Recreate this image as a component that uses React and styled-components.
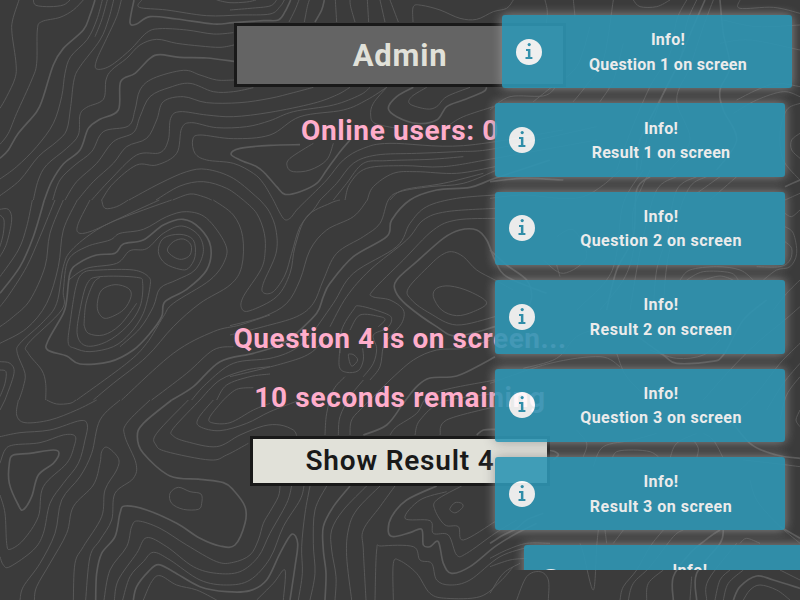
import React from 'react';
import styled, { createGlobalStyle } from 'styled-components';

const GlobalStyle = createGlobalStyle`
  * { box-sizing: border-box; }
  html, body, #root { margin: 0; height: 100%; overflow: hidden; }
  body { background: #3b3b3b; font-family: Roboto, "Liberation Sans", sans-serif; }
`;

/* Contour map: each tile has an origin; points are in thirds of a pixel.
   A leading "T" marks an index contour, a trailing "Z" a closed ring. */
const tiles = [
  { x: 0, y: 0, lines: `
57,0 38,60 36,100 48,190 45,235 20,290 0,325
100,0 108,16 150,20 190,15 210,0
250,0 220,30 180,52 125,65 112,90 110,190 95,240 50,340 25,400 0,433
T 285,0 270,45 250,90 190,145 160,195 130,290 110,335 55,400 25,450 0,475
307,0 290,60 262,118 212,170 195,220 185,290 160,370 110,440 50,500 0,537
341,0 325,60 300,120 240,200 222,240 212,320 200,390 170,425 115,470 60,540 0,587
322,0 305,60 285,110
364,0 350,50 320,115 290,180 290,207 330,198 390,150 440,98 480,86 560,90 640,102 700,98
100,600 115,540 140,495 200,445 235,405 240,345 260,322 310,298 318,240 335,210 380,175 420,135 470,118 530,130 600,138 660,142 702,135
T 133,600 155,545 190,492 240,450 265,385 300,358 355,330 362,245 405,220 450,175 480,164 540,172 620,174 702,184
158,600 180,540 225,495 275,455 310,395 385,378 405,330 420,270 460,235 550,211 600,225 650,240 702,240
195,600 230,545 290,490 340,425 400,398 420,350 450,290 510,262 570,250 640,275 700,275 760,263
233,600 280,545 340,490 380,440 440,415 470,360 490,305 550,290 620,308 720,308 810,295 880,278 940,262
275,600 330,540 410,465 480,458 505,420 512,355 540,335 620,345 700,350 810,337 940,310 1010,285 1050,262
305,600 340,550 410,495 470,495 530,460 545,385 575,368 650,383 740,380 810,362 880,335 1000,315 1080,285 1110,262
1160,262 1100,300 1030,330 900,350 810,405 700,416 600,405 578,420 585,460 620,480 700,490 760,520 790,550 820,600
T 1050,420 1020,455 980,510 950,550 900,575 855,583 830,560 795,520 770,500 720,480 693,462 720,445 810,436 900,434
387,600 480,550 560,515 620,508 700,535 780,600
468,600 540,558 610,545 680,565 730,600
518,600 570,582 610,590 635,600
T 402,0 390,68 410,72 450,50 530,57 640,72 700,68 790,62 835,60 855,35 872,0
425,0 418,22 500,30 620,47 720,45 810,42 840,20 853,0
650,0 690,8 740,6 768,0` },
  { x: 230, y: 0, lines: `
0,30 60,25 120,18 140,0
177,66 195,30 207,0
223,66 232,20 238,0
T 255,66 275,30 283,0
320,66 316,0
375,66 362,20 360,0
416,66 412,0
465,66 450,0
505,66 480,0
549,66 550,20 575,16 630,30 690,55 740,58 790,35 830,25 850,0
250,430 180,475 172,500 190,515 240,510 290,480 310,430
T 550,262 500,290 475,325 500,350 560,370 620,360 650,320 700,300 760,275 770,262
590,262 545,290 540,312 590,327 620,320 650,290 720,262
470,262 430,310 422,345 435,370 500,385
230,600 290,540 340,480 400,445 480,430 700,437 1000,390
270,600 320,550 370,490 440,465 560,460 680,455 800,445 1100,380
310,600 350,550 400,490 470,482 600,478 700,470
345,600 360,550 410,505 520,497 640,500 795,475 1100,420
412,600 430,560 490,520 560,515 680,520 795,500
480,600 520,570 640,550 760,520
650,380 700,350 790,320` },
  { x: 230, y: 180, lines: `
40,60 80,100 103,160 105,220 92,270 40,350 35,385 60,392 140,350 180,280 195,200 230,110 300,70 330,60
90,60 118,95 138,150 138,220 100,310 100,338 130,335 165,285 185,220 210,140 250,90 270,60
130,60 160,115 180,115 200,90 230,60
0,437 100,410 170,370 210,300 240,210 290,150 370,110 412,60
0,465 100,440 200,410 250,370 280,300 320,220 400,170 450,130 475,60 510,35 600,20 700,10 800,-30
T 200,460 260,400 280,350 300,310 370,230 470,170 485,120 540,60 620,30 720,22 795,-5 960,-60
240,470 310,370 370,280 500,200 540,130 590,80 680,55 795,45
300,440 350,350 420,270 530,180 580,120 650,95 795,85
795,115 680,120 610,150 520,240 430,330 428,350 480,360 520,390 515,430 480,470 460,500 450,560 420,600
T 950,340 830,290 795,240 770,180 740,150 690,150 640,175 560,245 500,300 497,335 530,375 620,440 680,468 795,440
850,330 795,300 740,270 700,230 665,215 635,225 600,255 535,325 545,360 600,400 680,435 795,410
610,350 620,325 660,318 720,335 770,368 730,395 680,407 635,390 Z
330,520 335,450 370,390 390,378 470,402 485,420 470,445 430,465 440,505 430,550 400,590
360,450 390,405 450,410 465,420 445,440
355,525 360,550 368,558 383,540 372,525 360,522 Z
330,500 328,560 350,577 385,572 400,540 398,505
480,600 550,540 620,510 700,505 780,480
0,590 160,550 240,520 290,470` },
  { x: 0, y: 200, lines: `
0,28 25,28 35,60 20,130 0,170
0,45 12,60 10,100 0,140
97,0 80,80 55,150 0,230
T 133,0 100,110 60,200 0,280
165,0 120,110 80,200 30,280 0,320
190,0 150,100 135,200 90,300 40,350 0,380
232,0 190,90 175,200 140,310 80,385 0,430
270,0 235,70 235,98 270,95 350,60 430,30 515,0
305,0 315,25 350,20 385,0
478,0 380,45 290,90 215,150 190,200 170,310 130,365 60,430 52,460 75,520 70,560 57,600
137,600 137,550 125,510 85,460 85,430 185,330 190,270 205,180 260,140 330,120 360,100 430,88 500,50 560,35 620,55 675,130 675,180 630,240 520,310 490,350 440,430 380,490 230,600
T 210,220 200,300 190,340 145,420 143,450 200,468 240,492 330,485 400,450 450,400 485,350 495,305 560,268 620,210 632,140 600,85 550,58 490,75 430,120 370,132 345,160 290,165 235,190 Z
205,430 210,370 228,260 250,218 300,210 400,210 445,230 450,260 430,340 390,400 340,440 270,455 225,445 Z
232,405 240,330 262,250 300,230 410,232 428,250 420,320 380,380 320,425 260,438 Z
252,375 258,310 280,250 300,232
252,375 265,400 310,405 360,375 410,310
292,310 305,270 345,254 385,265 393,290 370,330 320,355 297,340 Z
206,240 260,205 350,190 390,152 440,146 490,100 545,78 595,105 610,155 585,210 530,240 480,265 460,320 420,385 360,440
475,155 490,115 540,103 580,120 585,170 565,205 540,208 495,190 Z
502,150 520,125 550,117 573,135 570,165 545,178 520,170 Z
640,0 700,45 728,110 725,200 690,255 600,310 520,380 440,470 340,550 280,600
365,600 520,460 640,395 720,375 810,345
455,600 560,520 640,450 700,440
T 515,600 580,560 660,485 760,460 840,435 890,400
575,600 620,550 700,490 810,475 880,450 930,410
600,600 660,540 740,510 810,500
650,600 680,555 750,530 810,522
670,600 710,568 760,563
0,485 30,490 42,520 15,600
0,510 18,515 15,550 0,590` },
  { x: 0, y: 400, lines: `
55,0 50,45 75,68 150,60 230,30 290,0
140,0 170,12 210,10 228,0
15,0 0,30
0,110 60,98 150,90 240,62 262,75 255,120 235,190 190,250 150,310 130,400 100,450 30,500 10,495 0,470
0,190 15,150 40,135 120,128 190,105 225,108 222,140 200,190 130,260 115,350 70,420 30,448 20,430 15,340 0,285
T 40,165 90,160 160,150 177,160 160,190 115,225 95,290 70,329 55,315 28,250 28,190 Z
360,0 300,60 275,160 240,230 185,300 165,400 120,490 70,560 60,600
103,600 110,560 150,490 200,400 220,320 280,255 300,190 305,155 322,142 355,175 350,210 315,270 305,350 250,440 225,490 220,600
450,0 380,70 375,110 408,190 400,235 345,280 335,360 300,420 270,470 257,600
T 515,0 430,70 412,110 430,160 510,228 600,238 670,248 700,270 735,320 735,370 705,435 660,438 600,415 530,370 440,330 375,318 360,340 345,410 305,460 290,520 287,600
565,0 470,100 468,135 500,155 630,180 680,165 745,130
600,0 520,85 520,108 560,125 650,140 720,105 790,78 840,75 880,90 890,107
640,0 595,55 600,80 660,92 740,70 810,35 900,0
670,0 630,50 635,68 690,68 760,30 810,10
510,280 535,262 570,275 603,282 605,310 595,328 550,328 515,310 Z
312,600 330,510 380,440 395,380 415,363 480,385 560,435 650,485 700,487 750,465 775,420 790,370 810,335 835,290 840,258
343,600 355,540 410,460 440,413 500,440 580,500 650,520 720,515 775,470 810,400 860,310 875,258
368,600 390,530 430,485 460,457 510,480 600,540 680,555 750,540 810,475 850,380 900,300 912,258
T 400,600 410,560 445,515 475,494 520,515 600,560 680,575 750,572 800,540 840,460 875,403 893,430 885,500 870,600
430,600 455,545 480,527 530,555 590,570 650,600` },
  { x: 230, y: 400, lines: `
285,105 290,40 310,-30 345,-70
325,105 330,50 360,-10 400,-60
360,105 365,60 400,20 480,-60
T 400,105 470,75 520,10 560,-40 600,-66 680,-72 760,-110 795,-130
480,105 500,80 560,40 610,-20 795,-60
555,105 570,60 640,5 795,-20
630,105 650,60 795,20
T 740,105 760,90 795,88
80,600 130,550 165,510 160,600
240,258 225,340 215,440 217,520 205,600
290,258 255,330 250,430 255,520 240,600
T 360,258 310,320 280,380 280,450 288,520 285,600
410,258 340,330 305,390 305,450 318,530 315,600
450,258 380,330 355,390 350,470 365,600
495,258 450,320 400,390 400,450 408,600
T 620,258 530,300 485,350 475,395 490,410 540,398 575,388 580,435 600,440 625,425 640,490 665,520 720,500 795,440 860,400 920,370
650,275 570,300 525,355 600,362 610,400 655,405 680,465 710,460 795,400 860,360
695,258 620,300 615,330 645,375 685,380 700,420 795,365
660,325 675,308 695,310 698,322 678,338 664,334 Z
435,600 440,450 455,438 550,440 570,480 605,490 620,540 660,555 720,540 810,470 900,440
490,600 490,490 510,482 560,520 600,580 650,595 750,590 810,545 850,500` },
  { x: 490, y: 0, lines: `
165,0 172,45 160,140 200,230 170,285 60,290 0,330
250,0 255,50
430,0 450,20 500,20 540,0
590,0 560,60 540,160 480,260 420,400 380,510
620,0 590,70 570,180 520,280 470,420 450,510
T 645,0 610,80 560,200 510,300 450,420 440,510
670,0 640,80 600,200 560,300 600,420 540,510
750,0 750,25 850,22 930,40
700,60 800,80 930,75
690,130 780,120 930,150
T 690,0 700,100 720,200 690,270 700,330 740,420 680,510
740,300 800,270 860,250 930,260
730,340 800,300 880,275 930,290
930,400 905,420 905,450 930,475
930,310 890,330 870,400 880,480 930,540
130,305 180,265 260,200 300,80
250,305 290,255 340,180 370,0
330,305 370,240 400,130
0,595 100,585 210,595 280,590 340,555 390,510
T 0,545 100,535 220,540` },
  { x: 490, y: 170, lines: `
460,0 400,100 380,250 350,330 260,420
480,0 430,120 430,240 400,330 330,420
560,20 500,60 460,200 440,300 420,420
T 480,20 440,60 430,200 380,300 350,420
620,20 560,60 530,200 500,300 490,420
650,20 600,50 560,150 530,290 520,420
690,20 620,70
740,20 660,90
T 0,240 50,285 110,330 125,380 110,420
200,285 210,320
160,270 220,310 290,260 250,180 200,200
570,330 600,300 680,290 750,300 790,330
590,330 640,305 720,308 745,330
640,330 690,318 730,330
820,330 860,300 900,290 920,250 910,190 885,170
885,215 905,235 900,270 870,290 800,290
930,120 905,140 885,130
T 885,50 930,30
885,90 930,70
850,420 890,370 930,330` },
  { x: 490, y: 300, lines: `
100,205 200,175 260,110 340,80
0,250 180,190 330,170 390,200
T 430,100 520,165 560,190 660,185 700,165 760,60 830,0
480,150 560,175 640,165 690,120
380,160 410,230 480,300
930,20 890,55 800,130 720,210 640,300
930,130 870,190 800,280 740,340
930,190 880,250 830,330
930,230 890,285 870,360
930,330 918,360 930,380
280,470 290,430 260,390
310,500 340,440 430,420 500,400
365,480 380,455 430,450 480,455 505,470
T 170,450 195,455 205,465 190,480
540,475 560,430 620,400
620,475 625,445 610,420
700,475 670,420 640,400
T 930,475 860,465 780,430 700,330
930,500 850,490 760,480` },
  { x: 490, y: 480, lines: `
T 0,190 40,165 80,145 110,120 160,100
0,235 50,210 110,190 180,190
0,260 60,240 110,235
0,340 40,280 90,250
80,360 110,290 150,275 175,300 175,360
270,190 280,220 310,330 320,200 325,150
350,190 345,150
370,190 400,150
390,360 400,320 440,270 480,200 520,150
415,360 430,310 480,260 550,170 580,150
470,360 475,310 520,270
T 550,360 550,290 600,220 660,170 690,150
600,360 605,290
T 620,360 620,280 690,190 700,150
650,360 655,300 740,190
750,190 770,175 810,190
675,360 690,300 720,270
700,360 715,310 760,270
T 730,360 750,320 800,288 850,300 930,325
760,360 780,330 810,315 860,330 900,360
930,300 870,270
780,0 800,60 860,130 930,190
T 870,140 930,175` },
];

function toPath(points, closed) {
  const n = points.length;
  const at = (i) => (closed ? points[(i + n) % n] : points[Math.max(0, Math.min(n - 1, i))]);
  let d = `M${points[0][0]} ${points[0][1]}`;
  const last = closed ? n : n - 1;
  for (let i = 0; i < last; i += 1) {
    const [a, b, c, e] = [at(i - 1), at(i), at(i + 1), at(i + 2)];
    d += `C${b[0] + (c[0] - a[0]) / 6} ${b[1] + (c[1] - a[1]) / 6} ${c[0] - (e[0] - b[0]) / 6} ${c[1] - (e[1] - b[1]) / 6} ${c[0]} ${c[1]}`;
  }
  return d;
}

const contours = tiles.map((tile) => ({
  ...tile,
  paths: tile.lines.trim().split('\n').map((raw) => {
    const line = raw.trim();
    const closed = line.endsWith('Z');
    const major = line.startsWith('T');
    const points = line.replace(/[TZ]/g, '').trim().split(/\s+/).map((p) => p.split(',').map(Number));
    return { d: toPath(points, closed), major };
  }),
}));

const Page = styled.div`
  position: relative;
  width: 800px;
  height: 600px;
  overflow: hidden;
  background: #3b3b3b;
`;

const Backdrop = styled.svg`
  position: absolute;
  inset: 0;
  width: 100%;
  height: 100%;
  fill: none;
`;

const Contour = styled.path`
  stroke: ${(p) => (p.$major ? '#5b5b5b' : '#5a5a5a')};
  stroke-width: ${(p) => (p.$major ? 5 : 2.8)};
`;

const Main = styled.main`
  position: relative;
  display: flex;
  flex-direction: column;
  align-items: center;
  padding-top: 23px;
`;

const Header = styled.header`
  display: flex;
  align-items: center;
  justify-content: center;
  width: 332px;
  height: 64px;
  border: 3px solid #191919;
  background: #646464;
`;

const Title = styled.h1`
  margin: 2px 0 0;
  color: #e1e1d9;
  font-size: 31px;
  line-height: 40px;
  font-weight: 700;
  letter-spacing: ${(p) => p.$track}px;
`;

const Status = styled.p`
  margin: ${(p) => p.$gap}px 0 0;
  color: #ffadcb;
  font-size: 28px;
  line-height: 36px;
  font-weight: 700;
  white-space: nowrap;
  letter-spacing: ${(p) => p.$track}px;
`;

const ResultButton = styled.button`
  width: 300px;
  height: 50px;
  margin-top: 20px;
  padding: 0;
  border: 3px solid #191919;
  background: #e1e1d9;
  color: #191919;
  font: 600 28px/36px Roboto, "Liberation Sans", sans-serif;
  letter-spacing: ${(p) => p.$track}px;
`;

const ToastStack = styled.aside`
  position: absolute;
  top: 0;
  right: 0;
  width: 330px;
  height: 570px;
  padding: 15px 0 0 25px;
  overflow: hidden;
`;

const shifts = { first: 7, rest: 0, entering: 29 };

const ToastCard = styled.div`
  display: grid;
  grid-template-columns: 26px 1fr;
  align-items: center;
  width: 290px;
  height: 73.4px;
  margin: 0 0 15px ${(p) => shifts[p.$place]}px;
  padding: 0 15px 0 14px;
  border-radius: 3px;
  background: #2f96b4;
  color: #fff;
  opacity: 0.9;
  box-shadow: 0 0 12px #999;
`;

const ToastText = styled.div`
  padding: 2px 0 0 17px;
  text-align: center;
  font-size: 16px;
  line-height: 24.4px;
  font-weight: 700;
  white-space: nowrap;
  letter-spacing: ${(p) => p.$track}px;
`;

const InfoGlyph = styled.svg`
  display: block;
  width: 26px;
  height: 26px;
`;

function InfoIcon() {
  return (
    <InfoGlyph viewBox="0 0 26 26">
      <circle cx="13" cy="13" r="13" fill="#fff" />
      <circle cx="13.2" cy="5.6" r="1.6" fill="#2f96b4" />
      <path d="M10 10h4.4v8h2v2H9.5v-2h2.4v-6H10z" fill="#2f96b4" />
    </InfoGlyph>
  );
}

const toasts = [
  { text: 'Question 1 on screen', place: 'first', track: 0.3 },
  { text: 'Result 1 on screen', place: 'rest', track: 0.3 },
  { text: 'Question 2 on screen', place: 'rest', track: 0.48 },
  { text: 'Result 2 on screen', place: 'rest', track: 0.5 },
  { text: 'Question 3 on screen', place: 'rest', track: 0.48 },
  { text: 'Result 3 on screen', place: 'rest', track: 0.5 },
  { text: 'Question 4 on screen', place: 'entering', track: 0.48 },
];

export default function App() {
  return (
    <Page>
      <GlobalStyle />
      <Backdrop viewBox="0 0 800 600">
        {contours.map((tile) => (
          <g key={`${tile.x}-${tile.y}`} transform={`translate(${tile.x} ${tile.y}) scale(0.33333)`}>
            {tile.paths.map((c) => <Contour key={c.d} d={c.d} $major={c.major} />)}
          </g>
        ))}
      </Backdrop>
      <Main>
        <Header><Title $track={0.8}>Admin</Title></Header>
        <Status $gap={26} $track={0.65}>Online users: 0</Status>
        <Status $gap={172} $track={0.53}>Question 4 is on screen...</Status>
        <Status $gap={23} $track={0.65}>10 seconds remaining</Status>
        <ResultButton $track={0.8}>Show Result 4</ResultButton>
      </Main>
      <ToastStack>
        {toasts.map((t) => (
          <ToastCard key={t.text} $place={t.place}>
            <InfoIcon />
            <ToastText $track={t.track}>Info!<br />{t.text}</ToastText>
          </ToastCard>
        ))}
      </ToastStack>
    </Page>
  );
}
